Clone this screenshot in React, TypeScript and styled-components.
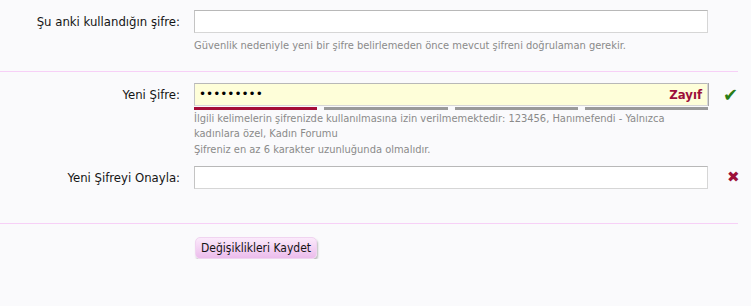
import styled, { createGlobalStyle } from "styled-components";

const GlobalStyle = createGlobalStyle`
  body {
    margin: 0;
    background: #fafafc;
    font-family: "DejaVu Sans Condensed", "DejaVu Sans", sans-serif;
    color: #141414;
  }
`;

const Form = styled.form`
  width: 751px;
`;

const Section = styled.div<{ $last?: boolean }>`
  width: 738px;
  padding: ${(p) => (p.$last ? "11px 0 34px" : "10px 0 17px")};
  border-bottom: 1px solid #f7d0f7;
  display: grid;
  gap: 9px;
`;

const Row = styled.div`
  display: grid;
  grid-template-columns: 180px 514px 44px;
  column-gap: 14px;
  align-items: start;
`;

const Label = styled.label`
  text-align: right;
  font-size: 13px;
  line-height: 23px;
  color: #141414;
`;

const Field = styled.div`
  display: flex;
  flex-direction: column;
`;

const InputWrap = styled.div`
  position: relative;
`;

const Input = styled.input<{ $warn?: boolean }>`
  box-sizing: border-box;
  width: 514px;
  height: 23px;
  margin: 0;
  padding: 0 4px;
  border: 1px solid #d6d6d6;
  border-top-color: #b8b8b8;
  border-left-color: #c4c4c4;
  background: ${(p) => (p.$warn ? "#fefed9" : "#ffffff")};
  box-shadow: ${(p) => (p.$warn ? "1px 0 0 #a8a8a8" : "none")};
  font-family: "DejaVu Sans", sans-serif;
  font-size: 12px;
  color: #000;
  outline: none;
`;

const Strength = styled.span`
  position: absolute;
  right: 6px;
  top: 0;
  line-height: 23px;
  font-size: 13px;
  font-weight: bold;
  color: #9c0f3a;
`;

const Meter = styled.div`
  display: flex;
  gap: 7px;
  margin-top: 1px;
`;

const MeterBar = styled.div<{ $on?: boolean }>`
  flex: 1;
  height: 3px;
  background: ${(p) => (p.$on ? "#a50d37" : "#9a9a9a")};
`;

const Hint = styled.p<{ $gap?: number }>`
  margin: ${(p) => p.$gap ?? 4}px 0 0;
  font-size: 11px;
  line-height: 15.5px;
  color: #8a8a8a;
`;

const Status = styled.span<{ $ok?: boolean }>`
  line-height: 23px;
  padding-left: ${(p) => (p.$ok ? "1px" : "5px")};
  font-size: ${(p) => (p.$ok ? "18px" : "15px")};
  color: ${(p) => (p.$ok ? "#2a7d16" : "#9c0f3a")};
  font-family: "DejaVu Sans", sans-serif;
`;

const Actions = styled.div`
  padding: 13px 0 0 195px;
`;

const SaveButton = styled.button`
  height: 22px;
  padding: 0 5px;
  border: 1px solid #f0d4f0;
  border-radius: 5px;
  background: linear-gradient(#fbeafb, #ecbcec);
  box-shadow: 1px 2px 2px rgba(0, 0, 0, 0.25);
  font-family: "DejaVu Sans Condensed", "DejaVu Sans", sans-serif;
  font-size: 12px;
  color: #141414;
  cursor: pointer;
`;

export default function App() {
  return (
    <>
      <GlobalStyle />
      <Form onSubmit={(e) => e.preventDefault()}>
        <Section>
          <Row>
            <Label>Şu anki kullandığın şifre:</Label>
            <Field>
              <Input type="password" />
              <Hint $gap={5}>Güvenlik nedeniyle yeni bir şifre belirlemeden önce mevcut şifreni doğrulaman gerekir.</Hint>
            </Field>
          </Row>
        </Section>

        <Section $last>
          <Row>
            <Label>Yeni Şifre:</Label>
            <Field>
              <InputWrap>
                <Input $warn type="password" defaultValue="123456789" readOnly />
                <Strength>Zayıf</Strength>
              </InputWrap>
              <Meter>
                <MeterBar $on />
                <MeterBar />
                <MeterBar />
                <MeterBar />
              </Meter>
              <Hint $gap={1}>
                İlgili kelimelerin şifrenizde kullanılmasına izin verilmemektedir: 123456, Hanımefendi - Yalnızca
                <br />
                kadınlara özel, Kadın Forumu
              </Hint>
              <Hint $gap={0}>Şifreniz en az 6 karakter uzunluğunda olmalıdır.</Hint>
            </Field>
            <Status $ok>✔</Status>
          </Row>
          <Row>
            <Label>Yeni Şifreyi Onayla:</Label>
            <Field>
              <Input type="password" />
            </Field>
            <Status>✖</Status>
          </Row>
        </Section>

        <Actions>
          <SaveButton type="submit">Değişiklikleri Kaydet</SaveButton>
        </Actions>
      </Form>
    </>
  );
}
